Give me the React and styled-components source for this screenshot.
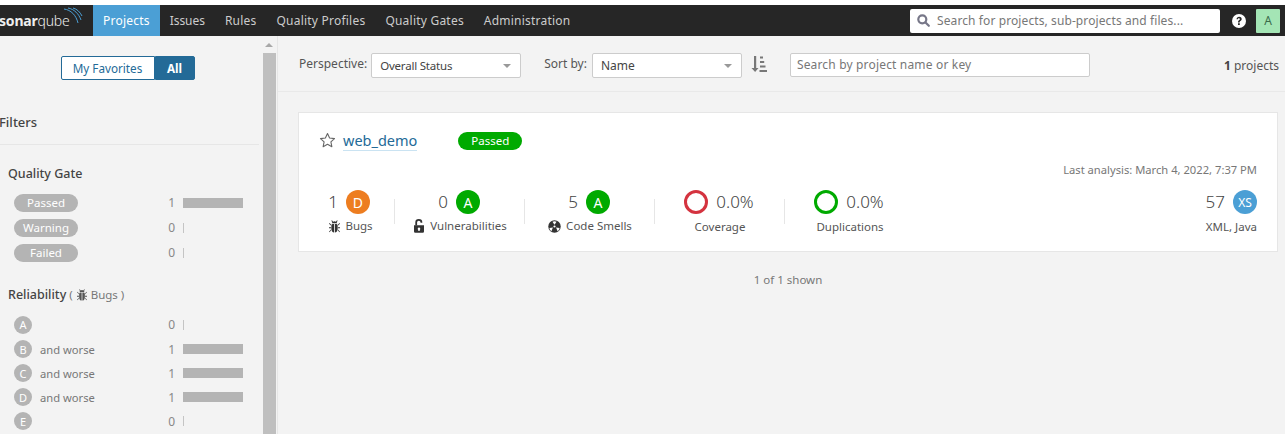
import React from "react";
import styled, { createGlobalStyle } from "styled-components";

const Global = createGlobalStyle`
  html, body { margin: 0; padding: 0; background: #fff; overflow: hidden; }
  body { font-family: "Noto Sans", "Open Sans", sans-serif; font-size: 12px; color: #444; }
  * { box-sizing: border-box; }
`;

const Page = styled.div`
  width: 1285px; height: 434px; display: flex; flex-direction: column;
  padding-top: 5px; overflow: hidden; background: #fff;
`;
const Nav = styled.header`
  height: 31px; background: #262626; display: flex; align-items: stretch; flex: none;
`;
const Logo = styled.div`
  width: 93px; display: flex; align-items: center; position: relative; overflow: hidden;
  color: #fff; font-size: 14px; letter-spacing: -0.2px; white-space: nowrap;
  b { font-weight: 700; }
  span { margin-left: -1px; font-weight: 300; color: #eee; }
  svg { position: absolute; left: 62px; top: 2px; }
`;
const NavItem = styled.a`
  display: flex; align-items: center; padding: 0 10px;
  font-size: 12px; letter-spacing: ${p => p.$ls ?? 0.22}px; color: ${p => p.$active ? "#fff" : "#ccc"};
  background: ${p => p.$active ? "#4b9fd5" : "transparent"};
`;
const NavRight = styled.div`
  margin-left: auto; display: flex; align-items: center; padding-right: 5px;
`;
const GlobalSearch = styled.div`
  width: 310px; height: 24px; background: #fff; border-radius: 2px; display: flex; align-items: center;
  padding-left: 7px; gap: 7px; color: #777; font-size: 12px; letter-spacing: 0.1px;
  margin-right: 12px;
`;
const HelpWrap = styled.div`
  width: 14px; height: 14px; margin-right: 10px; display: flex;
`;
const Avatar = styled.div`
  width: 24px; height: 24px; background: #a4e5b5; color: #3b6b4b; font-size: 12px;
  display: flex; align-items: center; justify-content: center; border-radius: 1px;
`;

const Body = styled.div`
  flex: 1; display: flex; min-height: 0; background: #f3f3f3;
`;
const Side = styled.aside`
  width: 278px; flex: none; display: flex; border-right: 1px solid #e6e6e6; overflow: hidden;
`;
const SideInner = styled.div`
  width: 263px; flex: none; padding-top: 20px;
`;
const Toggle = styled.div`
  display: flex; justify-content: center; margin-bottom: 33px; padding-right: 8px;
`;
const ToggleBtn = styled.div`
  height: 24px; display: flex; align-items: center; justify-content: center;
  border: 1px solid #236a97; font-size: 11.7px;
  width: ${p => p.$active ? "40px" : "94px"};
  background: ${p => p.$active ? "#236a97" : "#fff"};
  color: ${p => p.$active ? "#fff" : "#236a97"};
  font-weight: ${p => p.$active ? 700 : 400};
  border-radius: ${p => p.$active ? "0 2px 2px 0" : "2px 0 0 2px"};
`;
const FiltersTitle = styled.h2`
  margin: 0 4px 0 0; padding: 0 0 13px; border-bottom: 1px solid #e6e6e6;
  font-size: 13px; font-weight: 500; color: #444; line-height: 18px;
  text-indent: -1px;
`;
const Facet = styled.section`
  padding-left: 8px; margin-bottom: ${p => p.$mb || 0}px; margin-top: ${p => p.$mt || 0}px;
`;
const FacetTitle = styled.h3`
  margin: 0 0 ${p => p.$mb}px; font-size: 12.5px; font-weight: 500; color: #444; line-height: 18px;
  display: flex; align-items: center;
  small { font-size: 11.5px; font-weight: 400; color: #777; margin-left: 3px; display: flex; align-items: center; gap: 4px; }
`;
const FacetRow = styled.div`
  height: ${p => p.$h || 25}px; display: flex; align-items: center; padding-left: 6px;
`;
const Pill = styled.span`
  width: 64px; height: 18px; border-radius: 9px; background: #b4b4b4; color: #fff;
  font-size: 11.5px; display: flex; align-items: center; justify-content: center;
`;
const GreyRating = styled.span`
  width: 18px; height: 18px; border-radius: 50%; background: #b4b4b4; color: #fff;
  font-size: 11px; display: flex; align-items: center; justify-content: center; flex: none;
`;
const AndWorse = styled.span`
  margin-left: 8px; color: #777; font-size: 11.2px;
`;
const Count = styled.span`
  margin-left: auto; color: #888; font-size: 12px; width: 12px; text-align: right;
`;
const BarSlot = styled.span`
  width: 60px; margin: 0 20px 0 8px; height: 10px; display: block;
`;
const Bar = styled.span`
  display: block; height: 10px; background: ${p => p.$zero ? "#c4c4c4" : "#b4b4b4"};
`;
const Scroll = styled.div`
  width: 14px; flex: none; display: flex; flex-direction: column; align-items: flex-start;
`;
const ScrollArrow = styled.div`
  width: 0; height: 0; margin: 7px 0 6px 2px; border-left: 4px solid transparent; border-right: 4px solid transparent;
  border-bottom: 4px solid #a8a8a8;
`;
const ScrollThumb = styled.div`
  width: 13px; flex: 1; background: #bfbfbf;
`;

const Main = styled.main`
  flex: 1; min-width: 0; display: flex; flex-direction: column;
`;
const Toolbar = styled.div`
  height: 56px; flex: none; border-bottom: 1px solid #e9e9e9; display: flex; align-items: center;
  padding: 0 6px 0 21px;
`;
const ToolLabel = styled.span`
  font-size: 12px; color: #555; margin-right: ${p => p.$mr || 4}px;
`;
const Select = styled.div`
  width: ${p => p.$w}px; height: 25px; background: #fff; border: 1px solid #ccc; border-radius: 2px;
  display: flex; align-items: center; padding: 0 8px; font-size: ${p => p.$fs || 12}px; color: #444;
  letter-spacing: ${p => p.$ls || 0}px;
  justify-content: space-between; margin: 3px ${p => p.$mr || 0}px 0 0;
`;
const Caret = styled.i`
  width: 0; height: 0; border-left: 4px solid transparent; border-right: 4px solid transparent;
  border-top: 4px solid #999; margin-right: 1px; margin-top: 1px;
`;
const SearchBox = styled.div`
  width: 300px; height: 24px; background: #fff; border: 1px solid #ccc; border-radius: 2px;
  display: flex; align-items: center; padding: 0 6px; font-size: 12px; color: #777;
  letter-spacing: 0.17px; margin: 2px 0 0 23px;
`;
const ProjectsCount = styled.div`
  margin: 3px 0 0 auto; font-size: 12px; color: #555; b { color: #444; }
`;

const Card = styled.article`
  margin: 20px 7px 0 20px; height: 140px; background: #fff; border: 1px solid #e6e6e6;
  padding: 18px 20px 0 20px; flex: none;
`;
const CardTop = styled.div`
  display: flex; align-items: center; height: 19px;
`;
const ProjectName = styled.a`
  margin-left: 7px; font-size: 14.5px; color: #236a97; border-bottom: 1px solid #cae3f2; line-height: 20px;
`;
const PassedBadge = styled.span`
  margin-left: 41px; width: 64px; height: 18px; border-radius: 9px; background: #00aa00; color: #fff;
  font-size: 11.5px; line-height: 17px; padding-bottom: 1px; display: flex; align-items: center; justify-content: center;
`;
const Analysis = styled.div`
  text-align: right; margin-top: 12px; font-size: 11.2px; color: #777; line-height: 16px;
`;
const Measures = styled.div`
  display: flex; margin-top: 12px; align-items: flex-start;
`;
const Measure = styled.div`
  width: ${p => p.$w || 130}px; display: flex; flex-direction: column; align-items: center;
  padding-right: ${p => p.$pr || 0}px; position: relative; height: 46px;
  &::after {
    content: ""; display: ${p => p.$last ? "none" : "block"}; position: absolute; right: 0; top: 9px;
    width: 1px; height: 25px; background: #e6e6e6;
  }
`;
const MeasureTop = styled.div`
  display: flex; align-items: center; gap: 8px; height: 24px; margin-left: ${p => p.$ml ?? -2}px;
`;
const Value = styled.span`
  font-size: 17px; color: #444; font-weight: 300; line-height: 24px;
`;
const Rating = styled.span`
  width: 24px; height: 24px; border-radius: 50%; color: #fff; font-size: ${p => p.$fs || 14}px;
  display: flex; align-items: center; justify-content: center; flex: none;
  background: ${p => p.$bg};
`;
const Ring = styled.span`
  width: 24px; height: 24px; border-radius: 50%; border: 3px solid ${p => p.$c}; flex: none; display: block;
`;
const MLabel = styled.div`
  margin-top: ${p => p.$mt || 4}px; font-size: 11.5px; color: #555; line-height: 16px; display: flex; align-items: center; gap: 5px; white-space: nowrap;
`;
const SizeBlock = styled.div`
  margin-left: auto; display: flex; flex-direction: column; align-items: flex-end;
`;
const Shown = styled.div`
  text-align: center; margin-top: 19px; color: #777; font-size: 11.5px; line-height: 18px;
  width: 1020px;
`;

const BugIcon = ({ w = 11, h = 13, c = "#333" }) => (
  <svg width={w} height={h} viewBox="0 0 14 15" fill={c} preserveAspectRatio="none">
    <path d="M4.200 2.500 3 1l.8-.6L5.200 2A3 3 0 0 1 7 1.400 3 3 0 0 1 8.800 2L10.200.4 11 1 9.800 2.500c.3.400.5.800.6 1.200H3.600c.1-.4.300-.8.600-1.200Z" />
    <path d="M6.500 4.500v10C4.500 14.300 3.100 12.800 3 10.500V6.500c0-1 .6-2 1.500-2h2Zm1 0h2c.9 0 1.500 1 1.500 2v4c-.1 2.300-1.500 3.800-3.500 4v-10Z" />
    <path d="M.7 3.500 2.800 5.600v1.100L0 4.200l.7-.7Zm12.600 0 .7.700-2.800 2.500V5.600l2.100-2.100ZM0 8.500h2.800v1.100H0V8.500Zm11.200 0H14v1.100h-2.800V8.500Zm-8.400 2.300v1.100L.7 14.200 0 13.500l2.800-2.700Zm8.400 0 2.800 2.700-.7.700-2.100-2.300v-1.100Z" />
  </svg>
);
const LockIcon = () => (
  <svg width="12" height="14" viewBox="0 0 12 14" fill="#333">
    <path d="M1 6.200h10v6.300a1.200 1.200 0 0 1-1.200 1.200H2.200A1.200 1.200 0 0 1 1 12.500V6.200Zm5 2.300a1.300 1.300 0 0 0-.7 2.400v1.200h1.400v-1.200A1.300 1.300 0 0 0 6 8.500Z" fillRule="evenodd" />
    <path d="M2.300 6.500V3.300a3.500 3.200 0 0 1 7 0v.5H7.500v-.5a1.700 1.500 0 0 0-3.400 0v3.200Z" />
  </svg>
);
const SmellIcon = () => (
  <svg width="13" height="13" viewBox="0 0 14 14">
    <circle cx="7" cy="7" r="6.700" fill="#333" />
    <circle cx="7" cy="7" r="1.200" fill="#fff" />
    <path d="M7 5 4.800 1.900A6 6 0 0 1 9.200 1.900L7 5ZM5.300 8.200 1.500 8.500A6 6 0 0 0 3.700 12.200L5.300 8.200ZM8.700 8.200 10.300 12.200A6 6 0 0 0 12.500 8.500L8.700 8.200Z" fill="#fff" />
  </svg>
);
const StarIcon = () => (
  <svg width="17" height="17" viewBox="0 0 17 17" fill="none" stroke="#666" strokeWidth="1.100" strokeLinejoin="round">
    <path d="M8.500 1.500 10.600 6l4.900.6-3.600 3.300.950 4.800-4.350-2.400-4.350 2.400.950-4.800L1.500 6.600 6.400 6Z" />
  </svg>
);
const SortIconWrap = styled.svg`
  margin: 0 0 0 9px; flex: none;
`;
const SortIcon = () => (
  <SortIconWrap width="16" height="18" viewBox="0 0 16 18" fill="#777">
    <path d="M3 1h2.200v12h2.300L4.100 17 .5 13H3V1Z" />
    <path d="M9 1.500h3V3.500H9zM9 6h4.200v2H9zM9 10.500h5.500v2H9zM8.500 15H16v2H8.500z" />
  </SortIconWrap>
);
const SearchIcon = () => (
  <svg width="13" height="13" viewBox="0 0 13 13" fill="none" stroke="#778" strokeWidth="2.200">
    <circle cx="5.300" cy="5.300" r="4" />
    <path d="M8.500 8.500l3.300 3.300" strokeLinecap="round" />
  </svg>
);
const HelpIcon = () => (
  <svg width="14" height="14" viewBox="0 0 14 14">
    <circle cx="7" cy="7" r="7" fill="#fff" />
    <path d="M4.500 5.300C4.600 3.800 5.700 2.800 7.100 2.800c1.500 0 2.600.9 2.600 2.200 0 1-.6 1.600-1.300 2-.5.300-.7.600-.7 1.100v.3H6V8c0-.9.400-1.400 1-1.800.5-.3.900-.6.900-1.100 0-.5-.4-.8-1-.8s-1 .4-1 1H4.500ZM6 9.300h1.800v1.800H6z" fill="#262626" />
  </svg>
);

const FacetCount = ({ n }) => (
  <>
    <Count>{n}</Count>
    <BarSlot>
      <Bar $zero={n === 0} style={{ width: n === 0 ? 1 : 60 }} />
    </BarSlot>
  </>
);

export default function App() {
  return (
    <Page>
      <Global />
      <Nav>
        <Logo>
          <span><b>sonar</b>qube</span>
          <svg width="22" height="20" viewBox="0 0 22 20" fill="none" stroke="#4b9fd5" strokeWidth="1">
            <path d="M2 2c7 1 12 6 14 14M6 1c6 1 11 6 13 12M11 1c4 1 7 4 9 8" />
          </svg>
        </Logo>
        <NavItem $active>Projects</NavItem>
        <NavItem $ls={-0.05}>Issues</NavItem>
        <NavItem>Rules</NavItem>
        <NavItem>Quality Profiles</NavItem>
        <NavItem>Quality Gates</NavItem>
        <NavItem>Administration</NavItem>
        <NavRight>
          <GlobalSearch><SearchIcon />Search for projects, sub-projects and files...</GlobalSearch>
          <HelpWrap><HelpIcon /></HelpWrap>
          <Avatar>A</Avatar>
        </NavRight>
      </Nav>
      <Body>
        <Side>
          <SideInner>
            <Toggle>
              <ToggleBtn>My Favorites</ToggleBtn>
              <ToggleBtn $active>All</ToggleBtn>
            </Toggle>
            <FiltersTitle>Filters</FiltersTitle>
            <Facet $mt={20} $mb={21}>
              <FacetTitle $mb={7}>Quality Gate</FacetTitle>
              <FacetRow><Pill>Passed</Pill><FacetCount n={1} /></FacetRow>
              <FacetRow><Pill>Warning</Pill><FacetCount n={0} /></FacetRow>
              <FacetRow><Pill>Failed</Pill><FacetCount n={0} /></FacetRow>
            </Facet>
            <Facet>
              <FacetTitle $mb={8}>
                Reliability
                <small>( <BugIcon w={10} h={12} c="#555" /> Bugs )</small>
              </FacetTitle>
              <FacetRow $h={25}><GreyRating>A</GreyRating><FacetCount n={0} /></FacetRow>
              <FacetRow $h={24}><GreyRating>B</GreyRating><AndWorse>and worse</AndWorse><FacetCount n={1} /></FacetRow>
              <FacetRow $h={24}><GreyRating>C</GreyRating><AndWorse>and worse</AndWorse><FacetCount n={1} /></FacetRow>
              <FacetRow $h={24}><GreyRating>D</GreyRating><AndWorse>and worse</AndWorse><FacetCount n={1} /></FacetRow>
              <FacetRow $h={24}><GreyRating>E</GreyRating><FacetCount n={0} /></FacetRow>
            </Facet>
          </SideInner>
          <Scroll>
            <ScrollArrow />
            <ScrollThumb />
          </Scroll>
        </Side>
        <Main>
          <Toolbar>
            <ToolLabel>Perspective:</ToolLabel>
            <Select $w={150} $mr={23} $fs={11.5} $ls={-0.2}>Overall Status<Caret /></Select>
            <ToolLabel $mr={5}>Sort by:</ToolLabel>
            <Select $w={150}>Name<Caret /></Select>
            <SortIcon />
            <SearchBox>Search by project name or key</SearchBox>
            <ProjectsCount><b>1</b> projects</ProjectsCount>
          </Toolbar>
          <Card>
            <CardTop>
              <StarIcon />
              <ProjectName>web_demo</ProjectName>
              <PassedBadge>Passed</PassedBadge>
            </CardTop>
            <Analysis>Last analysis: March 4, 2022, 7:37 PM</Analysis>
            <Measures>
              <Measure $w={76} $pr={12} $first>
                <MeasureTop $ml={-4}><Value>1</Value><Rating $bg="#ed7d20">D</Rating></MeasureTop>
                <MLabel><BugIcon />Bugs</MLabel>
              </Measure>
              <Measure>
                <MeasureTop><Value>0</Value><Rating $bg="#00aa00">A</Rating></MeasureTop>
                <MLabel><LockIcon />Vulnerabilities</MLabel>
              </Measure>
              <Measure>
                <MeasureTop><Value>5</Value><Rating $bg="#00aa00">A</Rating></MeasureTop>
                <MLabel><SmellIcon />Code Smells</MLabel>
              </Measure>
              <Measure>
                <MeasureTop><Ring $c="#d4333f" /><Value>0.0%</Value></MeasureTop>
                <MLabel $mt={5}>Coverage</MLabel>
              </Measure>
              <Measure $last>
                <MeasureTop><Ring $c="#00aa00" /><Value>0.0%</Value></MeasureTop>
                <MLabel $mt={5}>Duplications</MLabel>
              </Measure>
              <SizeBlock>
                <MeasureTop $ml={0}><Value>57</Value><Rating $bg="#4b9fd5" $fs={12}>XS</Rating></MeasureTop>
                <MLabel $mt={5}>XML, Java</MLabel>
              </SizeBlock>
            </Measures>
          </Card>
          <Shown>1 of 1 shown</Shown>
        </Main>
      </Body>
    </Page>
  );
}
